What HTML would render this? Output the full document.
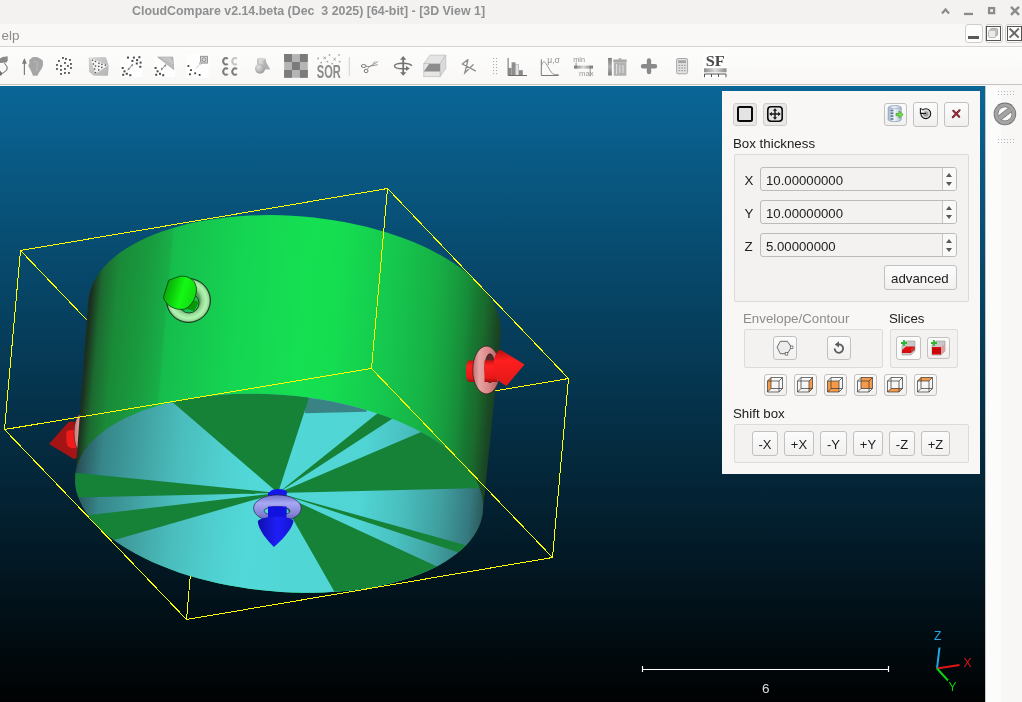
<!DOCTYPE html>
<html><head><meta charset="utf-8">
<style>
*{box-sizing:border-box;margin:0;padding:0}
html,body{width:1022px;height:702px;overflow:hidden;background:#f8f7f6;font-family:"Liberation Sans",sans-serif;position:relative}
body{will-change:transform}
.abs{position:absolute}
#title{left:0;top:0;width:1022px;height:24px;background:#f3f2f1}
#title .t{position:absolute;left:132px;top:4px;font-weight:bold;font-size:12.4px;color:#8e8f8f;white-space:pre}
#menu{left:0;top:24px;width:1022px;height:23px;background:#f9f8f7;border-bottom:1px solid #d8d6d4}
#menu .t{position:absolute;left:1.5px;top:4px;font-size:13.4px;color:#8c8c8c}
#tool{left:0;top:47px;width:1022px;height:39px;background:linear-gradient(#fdfdfc,#f8f7f6)}
#tool .bl{position:absolute;left:0;top:37px;width:1022px;height:1px;background:#c6c4c2}
#view{left:0;top:86px;width:985px;height:616px;background:linear-gradient(#0a6697 0px,#000 625px)}
#rpanel{left:985px;top:86px;width:37px;height:616px;background:linear-gradient(90deg,#c9c6c3 0,#c9c6c3 1px,#fcfcfc 1px,#fcfcfc 16px,#f8f7f6 16px)}
.dots{position:absolute;width:18px;height:5px;background-image:radial-gradient(circle,#b8b8b8 0.7px,transparent 0.9px);background-size:3px 3px}
#dlg{left:722px;top:91px;width:258px;height:383px;background:#f8f7f6}
.btn{position:absolute;border:1px solid #c3c1bf;border-radius:3px;background:linear-gradient(#fcfcfc,#f1f0ef)}
.grp{position:absolute;border:1px solid #dddbd9;border-radius:2px;background:#f3f2f1}
.lbl{position:absolute;font-size:13.3px;color:#202020;white-space:pre}
.spin{position:absolute;width:197px;height:24px;border:1px solid #bdbbb9;border-radius:3px;background:#f3f2f1}
.spin .v{position:absolute;left:5px;top:4px;font-size:13.2px;color:#1e1e1e}
.spin .sep{position:absolute;left:181px;top:0;width:1px;height:22px;background:#c8c6c4}
.spin .bg{position:absolute;left:182px;top:0;width:13px;height:22px;background:#f9f9f8;border-radius:0 2px 2px 0}
.spin .up{position:absolute;left:184.8px;top:4.6px;width:0;height:0;border-left:3.9px solid transparent;border-right:3.9px solid transparent;border-bottom:4px solid #585858}
.spin .dn{position:absolute;left:184.8px;top:14.2px;width:0;height:0;border-left:3.9px solid transparent;border-right:3.9px solid transparent;border-top:4px solid #585858}
.sb{position:absolute;top:431px;height:25px;font-size:13px;color:#1e1e1e;text-align:center;line-height:25px}
</style></head><body>
<div id="title" class="abs"><div class="t">CloudCompare v2.14.beta (Dec  3 2025) [64-bit] - [3D View 1]</div>
<svg class="abs" style="left:930px;top:0" width="92" height="24">
<path d="M12,13.5 L15.5,9.5 L19,13.5" fill="none" stroke="#8a8c8c" stroke-width="2.2"/>
<rect x="34" y="12.8" width="9" height="2.3" fill="#8a8c8c"/>
<rect x="59.1" y="8.1" width="5" height="5" fill="none" stroke="#8a8c8c" stroke-width="2.3"/>
<path d="M81,6.8 L89,14.8 M89,6.8 L81,14.8" stroke="#8a8c8c" stroke-width="2.4"/>
</svg>
</div>
<div id="menu" class="abs"><div class="t">elp</div>
<div class="abs" style="left:965px;top:0px;width:18px;height:19px;border:1px solid #d0cecc;border-radius:3px;background:#fdfdfc"></div>
<div class="abs" style="left:968px;top:12px;width:11px;height:3px;background:#5a5a58"></div>
<div class="abs" style="left:985px;top:0px;width:18px;height:19px;border:1px solid #d0cecc;border-radius:3px;background:#fdfdfc"></div>
<div class="abs" style="left:1005px;top:0px;width:18px;height:19px;border:1px solid #d0cecc;border-radius:3px;background:#fdfdfc"></div>
<svg class="abs" style="left:985px;top:0" width="37" height="23">
<rect x="1.5" y="2.5" width="14" height="14" fill="none" stroke="#555" stroke-width="1"/>
<rect x="5.3" y="4.4" width="7.3" height="7.3" rx="1.5" fill="#c4c4c4" stroke="#9a9a9a" stroke-width="0.8"/>
<rect x="3.5" y="6.2" width="7.3" height="7.3" rx="1.5" fill="#ebebeb" stroke="#a8a8a8" stroke-width="0.8"/>
<rect x="22.5" y="2.5" width="14" height="14" fill="none" stroke="#555" stroke-width="1"/>
<path d="M24.6,4.5 L33.8,13.6 M33.8,4.5 L24.6,13.6" stroke="#666" stroke-width="1.9"/>
</svg>
</div>
<div id="tool" class="abs"><div class="bl"></div>
<svg class="abs" style="left:0;top:0" width="1022" height="39" viewBox="0 47 1022 39">
<defs>
<linearGradient id="gsf" x1="0" x2="1"><stop offset="0" stop-color="#8a8a8a"/><stop offset="0.5" stop-color="#dcdcdc"/><stop offset="1" stop-color="#8a8a8a"/></linearGradient>
<linearGradient id="gmesh" x1="0" y1="0" x2="1" y2="1"><stop offset="0" stop-color="#d4d4d4"/><stop offset="1" stop-color="#b4b4b4"/></linearGradient>
<radialGradient id="gsph" cx="0.35" cy="0.35" r="0.7"><stop offset="0" stop-color="#e0e0e0"/><stop offset="1" stop-color="#9a9a9a"/></radialGradient>
<linearGradient id="gcyl" x1="0" x2="1"><stop offset="0" stop-color="#bcbcbc"/><stop offset="0.4" stop-color="#dedede"/><stop offset="1" stop-color="#a8a8a8"/></linearGradient>
<linearGradient id="gtrash" x1="0" y1="0" x2="0" y2="1"><stop offset="0" stop-color="#7a7a7a"/><stop offset="0.5" stop-color="#b0b0b0"/><stop offset="1" stop-color="#7a7a7a"/></linearGradient>
<linearGradient id="gmm" x1="0" x2="1"><stop offset="0" stop-color="#7a7a7a"/><stop offset="0.5" stop-color="#d8d8d8"/><stop offset="1" stop-color="#7a7a7a"/></linearGradient>
</defs>
<g fill="#fefefe">
<rect x="120.5" y="55.5" width="21.5" height="21.5"/><rect x="154" y="55.5" width="21" height="21.5"/><rect x="186" y="54" width="22.7" height="23.8"/><rect x="703" y="54" width="24" height="24"/>
</g>
<!-- 1 partial -->
<path d="M0,58.5 L2.5,57 L7.7,56.2 L7.7,60.5 L6.5,62.5 L0,63Z" fill="#8a8a8a"/>
<path d="M4.5,63.2 L7.2,67 L6.8,70.2 L3,73 L1,74" fill="none" stroke="#6a6a6a" stroke-width="1"/>
<path d="M0,70.5 L2.2,73.3 L1,76 L0,75Z" fill="#6a6a6a"/>
<!-- 2 arrow + rock -->
<path d="M24.4,75 V60" stroke="#7c7c7c" stroke-width="1.2"/>
<path d="M22,63.7 L24.4,58 L26.8,63.7Z" fill="#7c7c7c"/>
<path d="M33,57 L37,57 L40,58.5 L42.8,60.5 L43,65 L41.5,69 L39,72.5 L37.5,75.7 L33,75.7 L31.5,72 L29.5,68 L28.2,65.5 L29.5,63 L29,60.5 L31,58.5Z" fill="#a6a6a6"/>
<path d="M34,62 C37,61 39,63 37,66 C36,68 38,70 36,71" fill="none" stroke="#c0c0c0" stroke-width="0.8"/>
<!-- 3 dots -->
<g fill="#5e5e5e">
<rect x="62" y="57" width="1.9" height="1.9"/><rect x="65" y="58" width="1.9" height="1.9"/><rect x="69" y="59" width="1.9" height="1.9"/><rect x="58" y="60" width="1.9" height="1.9"/><rect x="64" y="62" width="1.9" height="1.9"/><rect x="70" y="63" width="1.9" height="1.9"/><rect x="56" y="64" width="1.9" height="1.9"/><rect x="60" y="65" width="1.9" height="1.9"/><rect x="67" y="65" width="1.9" height="1.9"/><rect x="70" y="67" width="1.9" height="1.9"/><rect x="56" y="68" width="1.9" height="1.9"/><rect x="60" y="69" width="1.9" height="1.9"/><rect x="64" y="68" width="1.9" height="1.9"/><rect x="60" y="73" width="1.9" height="1.9"/><rect x="64" y="72" width="1.9" height="1.9"/><rect x="68" y="72" width="1.9" height="1.9"/>
</g>
<!-- 4 mesh -->
<path d="M88.7,57.5 L105.5,57 L107,60 L108.7,66 L108,75.8 L94,75.8 L89,72Z" fill="url(#gmesh)"/>
<path d="M90.2,57.6 L107.8,65.5 L95.2,74Z" fill="#f4f4f4"/>
<g fill="#4a4a4a"><rect x="91.8" y="59.5" width="1.4" height="1.4"/><rect x="94.8" y="60.7" width="1.4" height="1.4"/><rect x="98.3" y="62.5" width="1.4" height="1.4"/><rect x="101.2" y="63.6" width="1.4" height="1.4"/><rect x="104.7" y="64.5" width="1.4" height="1.4"/><rect x="92.7" y="63.3" width="1.4" height="1.4"/><rect x="94.8" y="65.3" width="1.4" height="1.4"/><rect x="98" y="65.7" width="1.4" height="1.4"/><rect x="101.1" y="66.7" width="1.4" height="1.4"/><rect x="93.9" y="68.3" width="1.4" height="1.4"/><rect x="98" y="69.2" width="1.4" height="1.4"/><rect x="94.8" y="71.9" width="1.4" height="1.4"/></g>
<!-- 5 c2c -->
<g fill="#4a4a4a"><rect x="127" y="56.6" width="2" height="2"/><rect x="132.9" y="56.6" width="2" height="2"/><rect x="138.4" y="56.2" width="2" height="2"/><rect x="131.4" y="59.9" width="2" height="2"/><rect x="136.1" y="59.1" width="2" height="2"/><rect x="139.6" y="61.6" width="2" height="2"/><rect x="135.8" y="62.5" width="2" height="2"/><rect x="139.3" y="65.8" width="2" height="2"/><rect x="121.7" y="67" width="2" height="2"/><rect x="123.5" y="70.3" width="2" height="2"/><rect x="122.2" y="73.8" width="2" height="2"/><rect x="125.8" y="72.8" width="2" height="2"/><rect x="129.3" y="74.2" width="2" height="2"/></g>
<path d="M128.3,69.6 L132.4,64.6" stroke="#8a8a8a" stroke-width="1"/>
<path d="M127.6,70.4 L128,67.6 L130,69.2Z M133.1,63.8 L132.7,66.6 L130.7,65Z" fill="#8a8a8a"/>
<!-- 6 c2m -->
<path d="M157.6,57 L172.9,57 L173.8,69.6Z" fill="#bcbcbc" stroke="#9a9a9a" stroke-width="0.6"/>
<path d="M162,57.2 L172,63 M167,57.2 L173.2,62 M163.5,59 L167.5,57.2 M170,60.5 L169.5,57.2 M171,64 L173.3,63" stroke="#d8d8d8" stroke-width="0.6"/>
<g fill="#4a4a4a"><rect x="154.6" y="67" width="2" height="2"/><rect x="156.6" y="70.3" width="2" height="2"/><rect x="155.2" y="73.8" width="2" height="2"/><rect x="159" y="72.8" width="2" height="2"/><rect x="162.2" y="74.2" width="2" height="2"/></g>
<path d="M161.5,69.6 L165.6,64.9" stroke="#8a8a8a" stroke-width="1"/>
<path d="M160.8,70.4 L161.2,67.6 L163.2,69.2Z M166.3,64.1 L165.9,66.9 L163.9,65.3Z" fill="#8a8a8a"/>
<!-- 7 -->
<g fill="#3e3e3e"><rect x="187.5" y="65.1" width="1.8" height="1.8"/><rect x="190.1" y="69.2" width="1.8" height="1.8"/><rect x="189" y="73.4" width="1.8" height="1.8"/><rect x="194.3" y="72.4" width="1.8" height="1.8"/><rect x="198.7" y="74" width="1.8" height="1.8"/></g>
<path d="M196.3,68.4 L200.4,63.5" stroke="#a8a8a8" stroke-width="0.9" stroke-dasharray="1.2,0.8"/>
<rect x="200.6" y="56.3" width="6.8" height="6.8" fill="#d8d8d8" stroke="#8a8a8a" stroke-width="0.9"/>
<circle cx="204" cy="59.7" r="1.9" fill="none" stroke="#888" stroke-width="0.9"/>
<circle cx="200.6" cy="63" r="1" fill="#fff" stroke="#8a8a8a" stroke-width="0.7"/>
<!-- 8 CC -->
<g id="cc8"><path d="M227.70,58.95 A2.6,3.25 0 1 0 227.70,63.55" fill="none" stroke="#7c7c7c" stroke-width="2"/><path d="M236.80,58.95 A2.6,3.25 0 1 0 236.80,63.55" fill="none" stroke="#c4c4c4" stroke-width="2"/><path d="M227.70,69.25 A2.6,3.25 0 1 0 227.70,73.85" fill="none" stroke="#7c7c7c" stroke-width="2"/><path d="M236.80,69.25 A2.6,3.25 0 1 0 236.80,73.85" fill="none" stroke="#7c7c7c" stroke-width="2"/></g>
<!-- 9 primitives -->
<path d="M266,62 L270.3,69.6 L263.5,69.6Z" fill="#b0b0b0"/>
<path d="M257,59 V65.5 C257,66.8 265.9,66.8 265.9,65.5 V59Z" fill="url(#gcyl)"/>
<ellipse cx="261.45" cy="59" rx="4.45" ry="1.3" fill="#d6d6d6"/>
<circle cx="260" cy="68.7" r="5" fill="url(#gsph)"/>
<!-- 10 checker -->
<rect x="284.1" y="54.1" width="23.7" height="23.7" fill="#b5b5b5"/>
<path d="M284.1,54.1h7.9v7.9h-7.9z M299.9,54.1h7.9v7.9h-7.9z M292,62h7.9v7.9h-7.9z M284.1,69.9h7.9v7.9h-7.9z M299.9,69.9h7.9v7.9h-7.9z" fill="#7b7b7b"/>
<!-- 11 SOR -->
<text x="316.8" y="78" font-family="Liberation Sans" font-weight="bold" font-size="18" fill="#8c8c8c" textLength="24" lengthAdjust="spacingAndGlyphs">SOR</text>
<g fill="#a4a4a4"><circle cx="318.2" cy="58.5" r="0.9"/><circle cx="329.5" cy="54.9" r="0.9"/><circle cx="339" cy="54.9" r="0.9"/><circle cx="327.4" cy="61.6" r="0.9"/><circle cx="339.7" cy="61.6" r="0.9"/><circle cx="321.2" cy="62.6" r="0.9"/><circle cx="332.2" cy="63.6" r="0.9"/></g>
<path d="M323.5,56.6 l2.4,2.4 m0,-2.4 l-2.4,2.4 M333.4,58 l2.4,2.4 m0,-2.4 l-2.4,2.4" stroke="#8a8a8a" stroke-width="0.8"/>
<rect x="348.8" y="57" width="1" height="18.7" fill="#d2d2d2"/>
<!-- 12 scissors -->
<ellipse cx="363.7" cy="66" rx="2.4" ry="1.5" fill="none" stroke="#7a7a7a" stroke-width="1"/>
<ellipse cx="366.1" cy="71" rx="1.9" ry="1.7" fill="none" stroke="#7a7a7a" stroke-width="1"/>
<path d="M366,66.4 L370,66.5 M367,69.4 L370.5,65.5 M370,66.3 L377.8,61.6 M370.5,66 L377.8,64.7 M373,63.5 L375,61.5" stroke="#8a8a8a" stroke-width="0.9"/>
<!-- 13 move -->
<path d="M403.2,58 V74" stroke="#747474" stroke-width="1.8"/>
<path d="M400,59.8 L403.2,56.1 L406.4,59.8Z M400,72.2 L403.2,75.8 L406.4,72.2Z" fill="#747474"/>
<path d="M411.8,65.8 C410,63.5 406,63.2 403,63.2 C398,63.2 394.5,64 394.5,66 C394.5,68 398,68.7 403,68.7 L406,68.7" fill="none" stroke="#747474" stroke-width="1.4"/>
<path d="M406,66 L409.8,68.6 L406,71Z" fill="#747474"/>
<!-- 14 box -->
<path d="M423.8,63.7 L430,55.2 L445.8,55.2 L440,63.7Z" fill="#e4e4e4" stroke="#bcbcbc" stroke-width="0.7"/>
<path d="M440,63.7 L445.8,55.2 V68.5 L440,76.7Z" fill="#dadada" stroke="#bcbcbc" stroke-width="0.7"/>
<rect x="423.8" y="63.7" width="16.2" height="13" fill="#e6e6e6" stroke="#bcbcbc" stroke-width="0.7"/>
<path d="M423.8,71.4 L429.1,64 L440,64 L440,71.4Z" fill="#8c8c8c"/>
<!-- 15 star -->
<path d="M468,59.6 L464.8,73 L473.1,64.7 M462.3,64 L475.5,70.8 M462.3,64 L468,59.6" stroke="#8c8c8c" stroke-width="1.3" fill="none" stroke-linecap="round"/>
<g fill="#b0b0b0"><rect x="493" y="58" width="1.1" height="1.1"/><rect x="496" y="58" width="1.1" height="1.1"/><rect x="493" y="61" width="1.1" height="1.1"/><rect x="496" y="61" width="1.1" height="1.1"/><rect x="493" y="64" width="1.1" height="1.1"/><rect x="496" y="64" width="1.1" height="1.1"/><rect x="493" y="67" width="1.1" height="1.1"/><rect x="496" y="67" width="1.1" height="1.1"/><rect x="493" y="70" width="1.1" height="1.1"/><rect x="496" y="70" width="1.1" height="1.1"/><rect x="493" y="73" width="1.1" height="1.1"/><rect x="496" y="73" width="1.1" height="1.1"/></g>
<!-- 16 histogram -->
<rect x="508.4" y="67.9" width="3.2" height="7.6" fill="#8a8a8a"/><rect x="511.6" y="62.3" width="3.9" height="13.2" fill="#8e8e8e"/><rect x="515.7" y="64.2" width="3" height="11.3" fill="#e2e2e2" stroke="#9a9a9a" stroke-width="0.5"/><rect x="519" y="70.2" width="3.8" height="5.3" fill="#8a8a8a"/>
<path d="M508.1,58 V75.5 H527" stroke="#6c6c6c" stroke-width="1" fill="none"/>
<!-- 17 mu sigma -->
<path d="M541.3,59.3 V75.5 H558.6" stroke="#7a7a7a" stroke-width="1" fill="none"/>
<path d="M541.6,65.5 C542.5,62 543.5,61.5 544.5,62 C546.5,63 549,70 552.7,73.7 C554,74.6 556,74.6 558.6,74.6" stroke="#8a8a8a" stroke-width="0.9" fill="none"/>
<text x="547.3" y="62.6" font-family="Liberation Sans" font-size="8.5" fill="#8c8c8c" textLength="12.5" lengthAdjust="spacingAndGlyphs">μ,σ</text>
<!-- 18 min max -->
<text x="573.3" y="62" font-family="Liberation Sans" font-size="8" fill="#8c8c8c" textLength="11.6" lengthAdjust="spacingAndGlyphs">min</text>
<text x="579" y="76.4" font-family="Liberation Sans" font-size="8" fill="#9a9a9a" textLength="14.7" lengthAdjust="spacingAndGlyphs">max</text>
<rect x="574" y="65.6" width="19" height="3" fill="url(#gmm)"/>
<path d="M576.1,62.6 V68.6 M590.2,65.5 V76.4" stroke="#777" stroke-width="0.8"/>
<!-- 19 trash -->
<rect x="608.1" y="57.9" width="3.7" height="17.6" fill="url(#gtrash)"/>
<path d="M613.3,59.5 H626.7 V62.3 H613.3Z" fill="#a8a8a8"/><rect x="618.5" y="58.3" width="3" height="1.5" fill="#a8a8a8"/>
<rect x="613.8" y="62.3" width="12.6" height="13.5" fill="#b2b2b2"/>
<path d="M616.6,64 V74 M619.8,65 V73 M623,65 V73" stroke="#e8e8e8" stroke-width="0.9"/>
<!-- 20 plus -->
<path d="M649,60.5 V72 M643,66.2 H655" stroke="#8a8a8a" stroke-width="4.4" stroke-linecap="round"/>
<!-- 21 calc -->
<rect x="676.6" y="58.5" width="11" height="15.3" rx="1.5" fill="#e2e2e2" stroke="#a8a8a8" stroke-width="1"/>
<rect x="678.2" y="60.3" width="7.8" height="2.8" fill="#a4a4a4"/>
<g fill="#a0a0a0"><rect x="678.5" y="64.8" width="1.7" height="1.2"/><rect x="681.2" y="64.8" width="1.7" height="1.2"/><rect x="683.9" y="64.8" width="1.7" height="1.2"/><rect x="678.5" y="67.4" width="1.7" height="1.2"/><rect x="681.2" y="67.4" width="1.7" height="1.2"/><rect x="683.9" y="67.4" width="1.7" height="1.2"/><rect x="678.5" y="70" width="1.7" height="1.2"/><rect x="681.2" y="70" width="1.7" height="1.2"/><rect x="683.9" y="70" width="1.7" height="1.2"/></g>
<!-- 22 SF -->
<text x="705.8" y="66" font-family="Liberation Serif" font-weight="bold" font-size="15.5" fill="#484848" textLength="19" lengthAdjust="spacingAndGlyphs">SF</text>
<rect x="704" y="68.3" width="22.5" height="4" fill="url(#gsf)"/>
<path d="M704.5,77.3 V74 H726 V77.3 M711.5,74 V77 M718.5,74 V77" stroke="#555" stroke-width="1" fill="none"/>
</svg>

</div>
<div id="view" class="abs">
<svg width="985" height="616" viewBox="0 86 985 616" style="position:absolute;left:0;top:0">
<defs>
<linearGradient id="gw" x1="75" x2="500" y1="405" y2="405" gradientUnits="userSpaceOnUse" gradientTransform="rotate(5 287 405)">
<stop offset="0" stop-color="#1a2a1c"/>
<stop offset="0.018" stop-color="#1c3020"/>
<stop offset="0.04" stop-color="#1c6a30"/>
<stop offset="0.078" stop-color="#1a8a38"/>
<stop offset="0.153" stop-color="#199e40"/>
<stop offset="0.193" stop-color="#18ae47"/>
<stop offset="0.2" stop-color="#16bd4d"/>
<stop offset="0.365" stop-color="#15d552"/>
<stop offset="0.53" stop-color="#15e052"/>
<stop offset="0.6" stop-color="#15dc50"/>
<stop offset="0.718" stop-color="#15c84e"/>
<stop offset="0.824" stop-color="#17b045"/>
<stop offset="0.871" stop-color="#179c3e"/>
<stop offset="0.90" stop-color="#178c39"/>
<stop offset="0.92" stop-color="#167a32"/>
<stop offset="0.944" stop-color="#1a6a2c"/>
<stop offset="0.972" stop-color="#1a4a25"/>
<stop offset="1" stop-color="#1a3020"/>
</linearGradient>
<linearGradient id="gc" x1="74" x2="484" y1="493" y2="493" gradientUnits="userSpaceOnUse" gradientTransform="rotate(5 279 493)">
<stop offset="0" stop-color="#204a50"/>
<stop offset="0.015" stop-color="#2a5a60"/>
<stop offset="0.063" stop-color="#36868a"/>
<stop offset="0.185" stop-color="#45aaaa"/>
<stop offset="0.246" stop-color="#4abcbc"/>
<stop offset="0.356" stop-color="#50d0d0"/>
<stop offset="0.43" stop-color="#52d8d8"/>
<stop offset="0.70" stop-color="#50d4d4"/>
<stop offset="0.795" stop-color="#4ac0c0"/>
<stop offset="0.893" stop-color="#40a0a0"/>
<stop offset="0.966" stop-color="#357a80"/>
<stop offset="1" stop-color="#2a5a5a"/>
</linearGradient>
<clipPath id="cc"><path d="M482.9,511.0 482.2,516.1 480.9,521.2 479.1,526.1 476.7,531.0 473.8,535.8 470.3,540.4 466.3,544.9 461.8,549.3 456.8,553.5 451.3,557.6 445.4,561.5 439.0,565.2 432.1,568.7 424.8,572.0 417.2,575.1 409.1,577.9 400.7,580.5 392.0,582.9 382.9,585.0 373.6,586.9 364.0,588.5 354.2,589.9 344.1,591.0 333.9,591.8 323.6,592.4 313.1,592.7 302.5,592.7 291.9,592.5 281.2,591.9 270.5,591.1 259.9,590.1 249.3,588.7 238.8,587.1 228.3,585.3 218.1,583.2 208.0,580.8 198.1,578.2 188.4,575.4 178.9,572.4 169.8,569.1 160.9,565.6 152.4,561.9 144.2,558.1 136.4,554.0 128.9,549.8 121.9,545.5 115.3,541.0 109.2,536.3 103.5,531.6 98.3,526.7 93.6,521.8 89.4,516.7 85.7,511.6 82.6,506.5 80.0,501.3 78.0,496.1 76.4,490.9 75.5,485.7 75.1,480.5 75.3,475.4 76.0,470.3 77.3,465.2 79.1,460.3 81.5,455.4 84.4,450.6 87.9,446.0 91.9,441.5 96.4,437.1 101.4,432.9 106.9,428.8 112.8,424.9 119.2,421.2 126.1,417.7 133.4,414.4 141.0,411.3 149.1,408.5 157.5,405.9 166.2,403.5 175.3,401.4 184.6,399.5 194.2,397.9 204.0,396.5 214.1,395.4 224.3,394.6 234.6,394.0 245.1,393.7 255.7,393.7 266.3,393.9 277.0,394.5 287.7,395.3 298.3,396.3 308.9,397.7 319.4,399.3 329.9,401.1 340.1,403.2 350.2,405.6 360.1,408.2 369.8,411.0 379.3,414.0 388.4,417.3 397.3,420.8 405.8,424.5 414.0,428.3 421.8,432.4 429.3,436.6 436.3,440.9 442.9,445.4 449.0,450.1 454.7,454.8 459.9,459.7 464.6,464.6 468.8,469.7 472.5,474.8 475.6,479.9 478.2,485.1 480.2,490.3 481.8,495.5 482.7,500.7 483.1,505.9Z"/></clipPath>
</defs>
<g stroke="#ffff00" stroke-width="1" fill="none" shape-rendering="crispEdges">
<path d="M20.5,250.5 L202,440.5 L568.5,378.5 M202,440.5 L186.5,619.5"/>
</g>
<!-- red left gizmo (behind wall) -->
<defs><linearGradient id="gpl" x1="0" x2="1"><stop offset="0" stop-color="#c87070"/><stop offset="0.5" stop-color="#f4b0b0"/><stop offset="1" stop-color="#e09090"/></linearGradient></defs>
<path d="M49,444 L68,422.4 C71,421 75,421 77,424 L78,456 C76,459 74,459.5 73.3,458.7Z" fill="#a41414"/>
<path d="M66.5,432 C68,430 72,429.5 76,430 L76,448 C72,448.5 69,447.5 67.5,446 C66,442 66,436 66.5,432Z" fill="#f01c1c"/>
<ellipse cx="81" cy="433" rx="7" ry="18.5" fill="url(#gpl)" stroke="#4a2020" stroke-width="0.6"/>

<path d="M75.1,480.5 75.3,475.4 88.2,301.3 88.9,296.0 90.2,290.7 92.1,285.5 94.5,280.5 97.4,275.5 100.9,270.6 104.9,265.9 109.5,261.3 114.5,256.9 120.1,252.6 126.1,248.6 132.6,244.7 139.5,241.0 146.9,237.5 154.6,234.3 162.8,231.2 171.3,228.5 180.1,225.9 189.2,223.6 198.7,221.6 208.4,219.9 218.3,218.4 228.5,217.2 238.8,216.2 249.3,215.6 259.9,215.2 270.6,215.1 281.4,215.3 292.2,215.8 303.0,216.6 313.7,217.6 324.5,218.9 335.1,220.5 345.7,222.3 356.1,224.5 366.3,226.8 376.3,229.5 386.1,232.3 395.7,235.4 405.0,238.8 414.0,242.3 422.6,246.1 430.9,250.0 438.8,254.2 446.4,258.5 453.5,263.0 460.1,267.6 466.4,272.4 472.1,277.3 477.4,282.3 482.1,287.4 486.4,292.6 490.1,297.9 493.3,303.2 496.0,308.6 498.0,314.0 499.6,319.4 500.5,324.8 500.9,330.2 500.8,335.5 482.9,511.0 482.2,516.1 480.9,521.2 479.1,526.1 476.7,531.0 473.8,535.8 470.3,540.4 466.3,544.9 461.8,549.3 456.8,553.5 451.3,557.6 445.4,561.5 439.0,565.2 432.1,568.7 424.8,572.0 417.2,575.1 409.1,577.9 400.7,580.5 392.0,582.9 382.9,585.0 373.6,586.9 364.0,588.5 354.2,589.9 344.1,591.0 333.9,591.8 323.6,592.4 313.1,592.7 302.5,592.7 291.9,592.5 281.2,591.9 270.5,591.1 259.9,590.1 249.3,588.7 238.8,587.1 228.3,585.3 218.1,583.2 208.0,580.8 198.1,578.2 188.4,575.4 178.9,572.4 169.8,569.1 160.9,565.6 152.4,561.9 144.2,558.1 136.4,554.0 128.9,549.8 121.9,545.5 115.3,541.0 109.2,536.3 103.5,531.6 98.3,526.7 93.6,521.8 89.4,516.7 85.7,511.6 82.6,506.5 80.0,501.3 78.0,496.1 76.4,490.9 75.5,485.7Z" fill="url(#gw)"/>
<path d="M482.9,511.0 482.2,516.1 480.9,521.2 479.1,526.1 476.7,531.0 473.8,535.8 470.3,540.4 466.3,544.9 461.8,549.3 456.8,553.5 451.3,557.6 445.4,561.5 439.0,565.2 432.1,568.7 424.8,572.0 417.2,575.1 409.1,577.9 400.7,580.5 392.0,582.9 382.9,585.0 373.6,586.9 364.0,588.5 354.2,589.9 344.1,591.0 333.9,591.8 323.6,592.4 313.1,592.7 302.5,592.7 291.9,592.5 281.2,591.9 270.5,591.1 259.9,590.1 249.3,588.7 238.8,587.1 228.3,585.3 218.1,583.2 208.0,580.8 198.1,578.2 188.4,575.4 178.9,572.4 169.8,569.1 160.9,565.6 152.4,561.9 144.2,558.1 136.4,554.0 128.9,549.8 121.9,545.5 115.3,541.0 109.2,536.3 103.5,531.6 98.3,526.7 93.6,521.8 89.4,516.7 85.7,511.6 82.6,506.5 80.0,501.3 78.0,496.1 76.4,490.9 75.5,485.7 75.1,480.5 75.3,475.4 76.0,470.3 77.3,465.2 79.1,460.3 81.5,455.4 84.4,450.6 87.9,446.0 91.9,441.5 96.4,437.1 101.4,432.9 106.9,428.8 112.8,424.9 119.2,421.2 126.1,417.7 133.4,414.4 141.0,411.3 149.1,408.5 157.5,405.9 166.2,403.5 175.3,401.4 184.6,399.5 194.2,397.9 204.0,396.5 214.1,395.4 224.3,394.6 234.6,394.0 245.1,393.7 255.7,393.7 266.3,393.9 277.0,394.5 287.7,395.3 298.3,396.3 308.9,397.7 319.4,399.3 329.9,401.1 340.1,403.2 350.2,405.6 360.1,408.2 369.8,411.0 379.3,414.0 388.4,417.3 397.3,420.8 405.8,424.5 414.0,428.3 421.8,432.4 429.3,436.6 436.3,440.9 442.9,445.4 449.0,450.1 454.7,454.8 459.9,459.7 464.6,464.6 468.8,469.7 472.5,474.8 475.6,479.9 478.2,485.1 480.2,490.3 481.8,495.5 482.7,500.7 483.1,505.9Z" fill="url(#gc)"/>
<g clip-path="url(#cc)"><path d="M300,385 L372,385 L366.5,411.8 L305,413.2Z" fill="#3a8384"/><path d="M278,493 L-120.0,453.5 L-121.9,501.7Z M278,493 L-119.3,539.6 L-106.4,603.5Z M278,493 L476.5,840.3 L641.0,660.9Z M278,493 L658.0,618.0 L663.4,600.0Z M278,493 L677.9,483.2 L646.0,336.3Z M278,493 L613.4,275.0 L590.2,242.9Z M278,493 L401.7,112.6 L-25.1,231.9Z" fill="#158238"/></g>
<defs>
<radialGradient id="gtg" gradientUnits="userSpaceOnUse" cx="188.5" cy="300.5" r="22"><stop offset="0.5" stop-color="#5a9a5a"/><stop offset="0.62" stop-color="#90d890"/><stop offset="0.8" stop-color="#b4f4b4"/><stop offset="0.93" stop-color="#98dc98"/><stop offset="1" stop-color="#2a4a2a"/></radialGradient>
<linearGradient id="gcg" x1="0" y1="0.2" x2="1" y2="0.5"><stop offset="0" stop-color="#089808"/><stop offset="0.3" stop-color="#0cc80c"/><stop offset="0.6" stop-color="#14f814"/><stop offset="1" stop-color="#10dc10"/></linearGradient>
<linearGradient id="gtr" gradientUnits="userSpaceOnUse" x1="472" y1="0" x2="501" y2="0"><stop offset="0" stop-color="#b86a6a"/><stop offset="0.25" stop-color="#e8a4a4"/><stop offset="0.6" stop-color="#d88484"/><stop offset="1" stop-color="#a05858"/></linearGradient>
<linearGradient id="gsr" x1="0" y1="0" x2="0" y2="1"><stop offset="0" stop-color="#c81414"/><stop offset="0.25" stop-color="#ff2020"/><stop offset="0.8" stop-color="#e81818"/><stop offset="1" stop-color="#a01010"/></linearGradient>
<linearGradient id="gcr" x1="0" y1="0" x2="0" y2="1"><stop offset="0" stop-color="#b01010"/><stop offset="0.3" stop-color="#ff1e1e"/><stop offset="1" stop-color="#e01818"/></linearGradient>
<linearGradient id="gtb" gradientUnits="userSpaceOnUse" x1="0" y1="495" x2="0" y2="522"><stop offset="0" stop-color="#7070c8"/><stop offset="0.3" stop-color="#a8a8f4"/><stop offset="0.7" stop-color="#8484d8"/><stop offset="1" stop-color="#5a5aa8"/></linearGradient>
<linearGradient id="gcb" x1="0" y1="0" x2="1" y2="0"><stop offset="0" stop-color="#1010b0"/><stop offset="0.55" stop-color="#1e1ef8"/><stop offset="1" stop-color="#1414d0"/></linearGradient>
</defs>
<!-- green gizmo -->
<path d="M210.5,300.5 A22,22 0 1 0 166.5,300.5 A22,22 0 1 0 210.5,300.5Z M199,303 A10,10 0 1 0 179,303 A10,10 0 1 0 199,303Z" fill="url(#gtg)" fill-rule="evenodd" stroke="#1a2a1a" stroke-width="0.8"/>
<path d="M182,296 L199,302 L194,311 L180,307Z" fill="#0a980a"/>
<path d="M168.7,280.2 L180,276.2 C190,275.5 196.5,281 196.5,290 C196,299 191,306 185,309 C176,311 166,306 163.4,297.5 Z" fill="url(#gcg)" stroke="#0a2a0a" stroke-width="0.7"/>
<!-- red right gizmo -->
<ellipse cx="489.9" cy="368.2" rx="5.5" ry="14.8" fill="#5a2a2a"/>
<path d="M469,360.5 H490 V382 H469 C465,382 465,360.5 469,360.5Z" fill="url(#gsr)"/>
<path d="M500.2,370 A13.7,23.9 0 1 0 472.8,370 A13.7,23.9 0 1 0 500.2,370Z M495,368.2 A5.1,14.5 0 1 0 484.8,368.2 A5.1,14.5 0 1 0 495,368.2Z" fill="url(#gtr)" fill-rule="evenodd" stroke="#3a1818" stroke-width="0.7"/>
<rect x="484.5" y="360.5" width="13" height="21.5" fill="url(#gsr)"/>
<path d="M500,349.4 L524.5,364.4 L506.6,385.7 C491,381 490,356 500,349.4Z" fill="url(#gcr)"/>
<!-- blue gizmo -->
<rect x="268" y="492.5" width="18.5" height="27" fill="#1212e0"/>
<ellipse cx="278.4" cy="492.5" rx="8.8" ry="3.6" fill="#1616ec"/>
<path d="M301.2,508.3 A23.8,13.4 0 1 0 253.6,508.3 A23.8,13.4 0 1 0 301.2,508.3Z M290,511 A13,4.5 0 1 0 264,511 A13,4.5 0 1 0 290,511Z" fill="url(#gtb)" fill-rule="evenodd" stroke="#22224a" stroke-width="0.7"/>
<rect x="268" y="506.5" width="18.5" height="13" fill="#1212e0"/>
<path d="M257.8,521 C262,516 290,515 293.6,521 C292,530 280,542 273.9,547 C268,541 258,530 257.8,521Z" fill="url(#gcb)"/>

<g stroke="#ffff00" stroke-width="1" fill="none" shape-rendering="crispEdges">
<path d="M20.5,250.5 L387.5,188.5 L568.5,378.5 L552.5,557.5 L186.5,619.5 L4.5,429.5 Z M4.5,429.5 L371.5,368.5 L552.5,557.5 M387.5,188.5 L371.5,368.5"/>
</g>
<g stroke="#ffffff" stroke-width="1.2" fill="none"><path d="M642.5,666 V672 M642,669.5 H888.5 M888.5,666 V672"/></g>
<text x="762" y="693" font-family="Liberation Sans" font-size="13.5" fill="#dedede">6</text>
<g stroke-width="2" stroke-linecap="butt">
<line x1="937" y1="668.5" x2="939.5" y2="647.5" stroke="#1ea8e8"/>
<line x1="937" y1="668.5" x2="959.5" y2="665" stroke="#e01515"/>
<line x1="937" y1="668.5" x2="948" y2="680.5" stroke="#10d010"/>
</g>
<text x="934" y="639.5" font-family="Liberation Sans" font-size="12" fill="#1ea8e8">Z</text>
<text x="963.5" y="667" font-family="Liberation Sans" font-size="12" fill="#e01515">X</text>
<text x="948.5" y="691" font-family="Liberation Sans" font-size="12" fill="#10d010">Y</text>
</svg>
</div>
<div id="rpanel" class="abs">
<div class="dots" style="left:12px;top:4px"></div>
<svg class="abs" style="left:8px;top:15px" width="25" height="25">
<defs><clipPath id="cin"><circle cx="11.9" cy="12.9" r="7.2"/></clipPath></defs>
<circle cx="11.9" cy="12.9" r="11.3" fill="#727272"/>
<circle cx="11.9" cy="12.9" r="10.5" fill="#a4a4a4"/>
<circle cx="11.9" cy="12.9" r="7.3" fill="#767676"/>
<circle cx="11.9" cy="12.9" r="6.6" fill="#fbfbfb"/>
<g clip-path="url(#cin)"><rect x="2" y="10.5" width="20" height="4.8" transform="rotate(-38 11.9 12.9)" fill="#a4a4a4" stroke="#727272" stroke-width="0.8"/></g>
</svg>
<div class="dots" style="left:12px;top:52px"></div>
</div>
<div id="dlg" class="abs"></div>
<!-- top buttons -->
<div class="btn" style="left:733px;top:103px;width:24px;height:23px;background:#e9e8e7;border-color:#cfcdcb"></div>
<div class="abs" style="left:737px;top:106px;width:16px;height:16px;border:2.1px solid #0a0a0a;border-radius:2.5px;background:#e4e4e4"></div>
<div class="btn" style="left:763px;top:103px;width:24px;height:23px;background:#e9e8e7;border-color:#cfcdcb"></div>
<svg class="abs" style="left:767px;top:106px" width="16" height="16">
<rect x="0.8" y="0.8" width="14.4" height="14.4" rx="3.2" fill="#e4e4e4" stroke="#0a0a0a" stroke-width="1.6"/>
<path d="M8,4 V12 M4,8 H12" stroke="#1a1a1a" stroke-width="1.5"/>
<path d="M8,2.2 L5.8,4.8 H10.2Z M8,13.8 L5.8,11.2 H10.2Z M2.2,8 L4.8,5.8 V10.2Z M13.8,8 L11.2,5.8 V10.2Z" fill="#1a1a1a"/>
</svg>
<div class="btn" style="left:884px;top:103px;width:23px;height:23px"></div>
<svg class="abs" style="left:886px;top:104px" width="20" height="20">
<defs><linearGradient id="gdb" x1="0" x2="1"><stop offset="0" stop-color="#a8b8cc"/><stop offset="0.45" stop-color="#f4f7fb"/><stop offset="1" stop-color="#b0c0d4"/></linearGradient></defs>
<path d="M2.2,3.5 C2.2,1 15.2,1 15.2,3.5 V15.5 C15.2,18.3 2.2,18.3 2.2,15.5Z" fill="url(#gdb)" stroke="#8a9cb4" stroke-width="0.8"/>
<path d="M2.6,3.6 C3,5 14.5,5 14.8,3.6" fill="none" stroke="#8a9cb4" stroke-width="0.6"/>
<path d="M4.5,6.5 H7.5 M4.5,9.3 H7.5 M4.5,12.1 H7.5 M4.5,14.9 H7.5" stroke="#5a7090" stroke-width="1.5"/>
<path d="M10,9.5 H13 V7 L17.2,10.6 L13,14.2 V11.7 H10Z" fill="#78dc48" stroke="#3c9c28" stroke-width="0.7"/>
</svg>
<div class="btn" style="left:913px;top:102px;width:25px;height:25px"></div>
<svg class="abs" style="left:916px;top:105px" width="20" height="20">
<circle cx="9.8" cy="8.7" r="4.9" fill="#dcdcdc" stroke="#151515" stroke-width="1.1"/>
<circle cx="9.8" cy="8.9" r="2.7" fill="#9c9c9c"/>
<path d="M4.4,3.2 L10,8.4 L4.4,8.4Z" fill="#f8f8f8"/>
<path d="M4.4,3.2 V8.4 H10" fill="none" stroke="#151515" stroke-width="1.1"/>
<path d="M4.6,3.4 L6.6,4.6" stroke="#151515" stroke-width="1"/>
</svg>
<div class="btn" style="left:944px;top:102px;width:25px;height:25px"></div>
<svg class="abs" style="left:950px;top:107px" width="13" height="13">
<path d="M2.8,10.2 L9.6,3.2 M3.3,3.8 L9.2,9.8" stroke="#5a1a22" stroke-width="2" stroke-linecap="round"/>
<path d="M2.8,10.2 L9.6,3.2 M3.3,3.8 L9.2,9.8" stroke="#c03444" stroke-width="1" stroke-linecap="round"/>
</svg>
<div class="lbl" style="left:733px;top:136px;line-height:15px">Box thickness</div>
<div class="grp" style="left:734px;top:154px;width:235px;height:148px"></div>
<div class="lbl" style="left:744.5px;top:173px;line-height:15px">X</div>
<div class="spin" style="left:760px;top:167px"><div class="v" style="top:5px;line-height:15px">10.00000000</div><div class="bg"></div><div class="sep"></div><div class="up"></div><div class="dn"></div></div>
<div class="lbl" style="left:744.5px;top:206px;line-height:15px">Y</div>
<div class="spin" style="left:760px;top:200px"><div class="v" style="top:5px;line-height:15px">10.00000000</div><div class="bg"></div><div class="sep"></div><div class="up"></div><div class="dn"></div></div>
<div class="lbl" style="left:744.5px;top:239px;line-height:15px">Z</div>
<div class="spin" style="left:760px;top:233px"><div class="v" style="top:5px;line-height:15px">5.00000000</div><div class="bg"></div><div class="sep"></div><div class="up"></div><div class="dn"></div></div>
<div class="btn" style="left:884px;top:265px;width:73px;height:25px"></div>
<div class="lbl" style="left:891px;top:271px;line-height:15px">advanced</div>
<div class="lbl" style="left:743px;top:311px;line-height:15px;color:#8c8c8c">Envelope/Contour</div>
<div class="lbl" style="left:889px;top:311px;line-height:15px">Slices</div>
<div class="grp" style="left:744px;top:329px;width:139px;height:39px"></div>
<div class="grp" style="left:890px;top:329px;width:68px;height:39px"></div>
<div class="btn" style="left:773px;top:336px;width:24px;height:24px"></div>
<svg class="abs" style="left:775px;top:338px" width="20" height="20">
<path d="M2.1,9.2 L5.3,3.3 L12.3,3.3 L16.5,9.2 L12.3,15.7 L5.3,15.7Z" fill="#ececec" stroke="#5a5a5a" stroke-width="0.9"/>
<rect x="15.3" y="8" width="2.6" height="2.6" fill="#fff" stroke="#5a5a5a" stroke-width="0.7"/>
<rect x="10.2" y="14.5" width="2.6" height="2.6" fill="#fff" stroke="#5a5a5a" stroke-width="0.7"/>
</svg>
<div class="btn" style="left:827px;top:336px;width:24px;height:24px"></div>
<svg class="abs" style="left:831px;top:340px" width="16" height="16">
<path d="M7.6,4.4 A4.2,4.2 0 1 1 3.7,8.6" fill="none" stroke="#5c5c5c" stroke-width="1.8"/>
<path d="M8,1.3 L8,7.5 L3.8,4.4Z" fill="#5c5c5c"/>
</svg>
<div class="btn" style="left:896px;top:336px;width:25px;height:24px;background:#fcfcfc"></div>
<svg class="abs" style="left:898px;top:338px" width="21" height="20">
<path d="M4,7 L8,3 L17,3 L17,13 L13,17 L4,17Z" fill="#c8c8c8" stroke="#999" stroke-width="0.6"/>
<path d="M4,12 L8,8.5 L17,8.5 L13,12Z" fill="#e01010"/>
<rect x="4" y="12" width="9" height="3" fill="#d80c0c"/>
<path d="M13,12 L17,8.5 V11.5 L13,15Z" fill="#c03030"/>
<path d="M6,2 V8 M3,5 H9" stroke="#2cb82c" stroke-width="1.8"/>
</svg>
<div class="btn" style="left:927px;top:337px;width:23px;height:22px"></div>
<svg class="abs" style="left:928px;top:338px" width="21" height="20">
<path d="M4,7 L8,3 L17,3 L17,13 L13,17 L4,17Z" fill="#c8c8c8" stroke="#999" stroke-width="0.6"/>
<rect x="4" y="9" width="9" height="7.5" fill="#d80c0c"/>
<path d="M4,11.5 H13 M4,14 H13" stroke="#a00" stroke-width="0.7"/>
<path d="M13,9 L17,5.5 V13 L13,16.5Z" fill="#d8a0a0"/>
<path d="M6,2 V8 M3,5 H9" stroke="#2cb82c" stroke-width="1.8"/>
</svg>
<div class="btn" style="left:764px;top:374px;width:23px;height:22px"></div><svg class="abs" style="left:764px;top:374px" width="23" height="22"><path d="M3.5,7 L3.5,18 L7,14.5 L7,3.5Z" fill="#f59a4a"/><path d="M3.5,7 H15 V18 H3.5Z M7,3.5 H18.5 V14.5 H7Z M3.5,7 L7,3.5 M15,7 L18.5,3.5 M15,18 L18.5,14.5 M3.5,18 L7,14.5" fill="none" stroke="#333" stroke-width="0.7"/></svg><div class="btn" style="left:794px;top:374px;width:23px;height:22px"></div><svg class="abs" style="left:794px;top:374px" width="23" height="22"><path d="M15,7 L15,18 L18.5,14.5 L18.5,3.5Z" fill="#f59a4a"/><path d="M3.5,7 H15 V18 H3.5Z M7,3.5 H18.5 V14.5 H7Z M3.5,7 L7,3.5 M15,7 L18.5,3.5 M15,18 L18.5,14.5 M3.5,18 L7,14.5" fill="none" stroke="#333" stroke-width="0.7"/></svg><div class="btn" style="left:824px;top:374px;width:23px;height:22px"></div><svg class="abs" style="left:824px;top:374px" width="23" height="22"><path d="M3.5,7 H15 V18 H3.5Z" fill="#f59a4a"/><path d="M3.5,7 H15 V18 H3.5Z M7,3.5 H18.5 V14.5 H7Z M3.5,7 L7,3.5 M15,7 L18.5,3.5 M15,18 L18.5,14.5 M3.5,18 L7,14.5" fill="none" stroke="#333" stroke-width="0.7"/></svg><div class="btn" style="left:854px;top:374px;width:23px;height:22px"></div><svg class="abs" style="left:854px;top:374px" width="23" height="22"><path d="M7,3.5 H18.5 V14.5 H7Z" fill="#f59a4a"/><path d="M3.5,7 H15 V18 H3.5Z M7,3.5 H18.5 V14.5 H7Z M3.5,7 L7,3.5 M15,7 L18.5,3.5 M15,18 L18.5,14.5 M3.5,18 L7,14.5" fill="none" stroke="#333" stroke-width="0.7"/></svg><div class="btn" style="left:884px;top:374px;width:23px;height:22px"></div><svg class="abs" style="left:884px;top:374px" width="23" height="22"><path d="M3.5,18 L7,14.5 H18.5 L15,18Z" fill="#f59a4a"/><path d="M3.5,7 H15 V18 H3.5Z M7,3.5 H18.5 V14.5 H7Z M3.5,7 L7,3.5 M15,7 L18.5,3.5 M15,18 L18.5,14.5 M3.5,18 L7,14.5" fill="none" stroke="#333" stroke-width="0.7"/></svg><div class="btn" style="left:914px;top:374px;width:23px;height:22px"></div><svg class="abs" style="left:914px;top:374px" width="23" height="22"><path d="M3.5,7 L7,3.5 H18.5 L15,7Z" fill="#f59a4a"/><path d="M3.5,7 H15 V18 H3.5Z M7,3.5 H18.5 V14.5 H7Z M3.5,7 L7,3.5 M15,7 L18.5,3.5 M15,18 L18.5,14.5 M3.5,18 L7,14.5" fill="none" stroke="#333" stroke-width="0.7"/></svg>
<div class="lbl" style="left:733px;top:406px;line-height:15px">Shift box</div>
<div class="grp" style="left:734px;top:424px;width:235px;height:39px"></div>
<div class="btn sb" style="left:752px;width:26px">-X</div>
<div class="btn sb" style="left:784px;width:30px">+X</div>
<div class="btn sb" style="left:820px;width:27px">-Y</div>
<div class="btn sb" style="left:853px;width:30px">+Y</div>
<div class="btn sb" style="left:889px;width:26px">-Z</div>
<div class="btn sb" style="left:921px;width:29px">+Z</div>

</body></html>
